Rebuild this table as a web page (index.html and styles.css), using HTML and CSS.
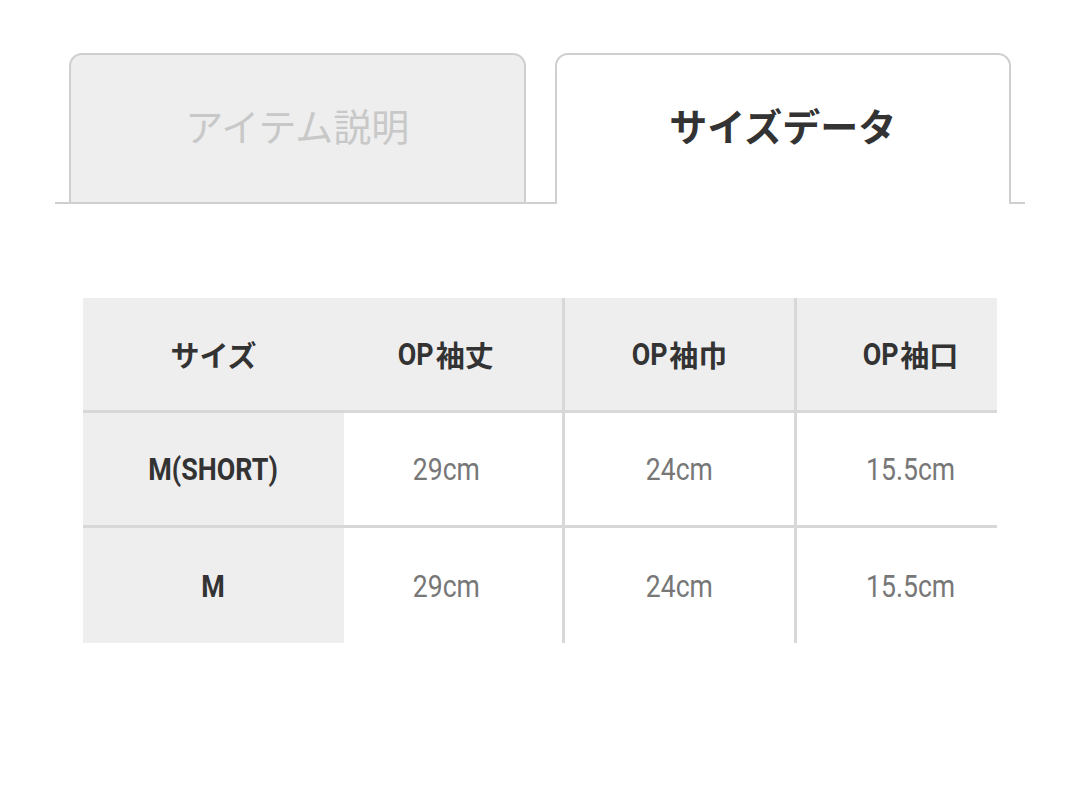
FILE: index.html
```html
<!DOCTYPE html>
<html lang="ja">
<head>
<meta charset="utf-8">
<link rel="stylesheet" href="styles.css">
</head>
<body>
<div class="page">
  <div class="tabs">
    <div class="tab tab-inactive">アイテム説明</div>
    <div class="tab tab-active">サイズデータ</div>
  </div>
  <div class="table-wrap">
    <table class="size-table">
      <colgroup>
        <col class="c1"><col class="c2"><col class="c3"><col class="c4">
      </colgroup>
      <thead>
        <tr>
          <th class="label"><span class="jp">サイズ</span></th>
          <th class="col2"><span class="lat-b op">OP</span><span class="jp">袖丈</span></th>
          <th class="sep"><span class="lat-b op">OP</span><span class="jp">袖巾</span></th>
          <th class="sep"><span class="lat-b op">OP</span><span class="jp">袖口</span></th>
        </tr>
      </thead>
      <tbody>
        <tr>
          <th class="label"><span class="lat-b">M(SHORT)</span></th>
          <td class="col2"><span class="lat">29cm</span></td>
          <td class="sep"><span class="lat">24cm</span></td>
          <td class="sep"><span class="lat">15.5cm</span></td>
        </tr>
        <tr class="last">
          <th class="label"><span class="lat-b">M</span></th>
          <td class="col2"><span class="lat">29cm</span></td>
          <td class="sep"><span class="lat">24cm</span></td>
          <td class="sep"><span class="lat">15.5cm</span></td>
        </tr>
      </tbody>
    </table>
  </div>
</div>
</body>
</html>
```

FILE: styles.css
```css
html, body {
  margin: 0;
  padding: 0;
  background: #ffffff;
}

body {
  font-family: Roboto, "Noto Sans CJK JP", sans-serif;
  color: #333333;
}

.page {
  width: 1080px;
  height: 786px;
  overflow: hidden;
}

.tabs {
  margin: 53px 55px 0 55px;
  padding: 0 14px;
  display: flex;
  gap: 29px;
  border-bottom: 2px solid #cfcfcf;
  height: 149px;
  align-items: stretch;
}

.tab {
  flex: 1 1 0;
  border: 2px solid #cfcfcf;
  border-bottom: none;
  border-radius: 13px 13px 0 0;
  display: flex;
  align-items: center;
  justify-content: center;
  font-family: "Noto Sans CJK JP", sans-serif;
  font-size: 38px;
  padding-bottom: 8px;
  box-sizing: border-box;
}

.tab-inactive {
  background: #eeeeee;
  color: #c8c8c8;
  font-weight: 400;
}

.tab-active {
  background: #ffffff;
  color: #333333;
  font-weight: 700;
  height: 151px;
  margin-bottom: -2px;
  position: relative;
  padding-bottom: 10px;
}

.table-wrap {
  margin: 94px 0 0 83px;
  width: 914px;
  overflow: hidden;
}

.size-table {
  border-collapse: separate;
  border-spacing: 0;
  table-layout: fixed;
  width: 941px;
}

.c1 { width: 261px; }
.c2 { width: 218px; }
.c3 { width: 232px; }
.c4 { width: 230px; }

.size-table th,
.size-table td {
  height: 112px;
  padding: 0;
  text-align: center;
  vertical-align: middle;
  border-bottom: 3px solid #d8d8d8;
  box-sizing: content-box;
  white-space: nowrap;
}

.size-table .col2 {
  padding-right: 14px;
}

.size-table thead th,
.size-table th.label {
  background: #eeeeee;
  color: #333333;
  font-weight: 700;
}

.size-table td {
  color: #777777;
  font-weight: 400;
}

.size-table .sep {
  border-left: 3px solid #d8d8d8;
}

.size-table tr.last th,
.size-table tr.last td {
  border-bottom: none;
  height: 115px;
}

.jp {
  font-family: "Noto Sans CJK JP", sans-serif;
  font-size: 29px;
  font-weight: 700;
  vertical-align: middle;
}

.lat,
.lat-b {
  display: inline-block;
  font-family: Roboto, sans-serif;
  font-size: 32px;
  line-height: 1;
  vertical-align: middle;
}

.lat {
  font-weight: 400;
  transform: scaleX(0.83);
}

.lat-b {
  font-weight: 700;
  transform: scaleX(0.84);
}

.lat-b.op {
  transform-origin: right center;
  margin-left: -7px;
  margin-right: 2px;
}
```
